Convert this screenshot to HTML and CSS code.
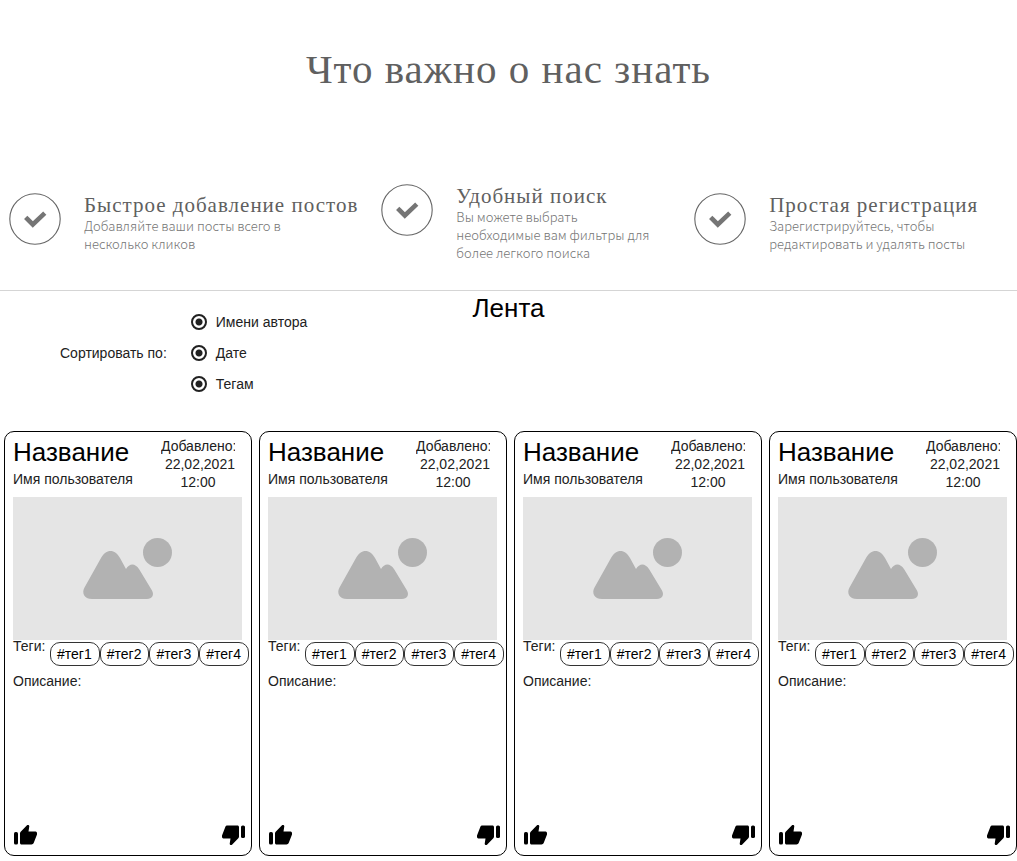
FILE: index.html
```html
<!DOCTYPE html>
<html lang="ru">
<head>
<meta charset="utf-8">
<meta name="viewport" content="width=device-width, initial-scale=1">
<title>Лента</title>
<link rel="stylesheet" href="styles.css">
</head>
<body>
<svg class="sprite" aria-hidden="true">
  <symbol id="check" viewBox="0 0 52 52">
    <circle cx="26" cy="26" r="25.2" fill="none" stroke="#666" stroke-width="1.1"/>
    <path d="M18.300 26l5.500 5.500 10.300-9.800" fill="none" stroke="#757575" stroke-width="4.600" stroke-linecap="square" stroke-linejoin="miter"/>
  </symbol>
  <symbol id="photo" viewBox="0 0 229 143">
    <rect width="229" height="143" fill="#e5e5e5"/>
    <circle cx="144.500" cy="55.500" r="14.500" fill="#b2b2b2"/>
    <path d="M79 102c-8 0-10.500-6-7.500-11.500L88 61c5-9.500 14-9.500 19 0l6 11c3.500-6 9-6 13 0l13 21.500c2.500 4.500 0 8.500-5 8.500z" fill="#b2b2b2"/>
  </symbol>
  <symbol id="thumb" viewBox="0 0 24 24">
    <rect x="1" y="9" width="4" height="12.500" rx="1.600"/>
    <path d="M7 20V10.300c0-.6.300-1.200.7-1.600L14 2.300c.8-.9 2.400-.2 2.300 1L15.500 8.400H22c1.600 0 2.600 1.500 2 3l-3.300 8.700c-.4.900-1.200 1.400-2.200 1.400H8.600C7.700 21.500 7 20.900 7 20z"/>
  </symbol>
</svg>

<header class="about">
  <h1 class="about-title">Что важно о нас знать</h1>
  <div class="features">
    <section class="feature">
      <svg class="feature-icon" aria-hidden="true"><use href="#check"/></svg>
      <div>
        <h2 class="feature-title">Быстрое добавление постов</h2>
        <p class="feature-text">Добавляйте ваши посты всего в несколько кликов</p>
      </div>
    </section>
    <section class="feature">
      <svg class="feature-icon" aria-hidden="true"><use href="#check"/></svg>
      <div>
        <h2 class="feature-title">Удобный поиск</h2>
        <p class="feature-text">Вы можете выбрать необходимые вам фильтры для более легкого поиска</p>
      </div>
    </section>
    <section class="feature">
      <svg class="feature-icon" aria-hidden="true"><use href="#check"/></svg>
      <div>
        <h2 class="feature-title">Простая регистрация</h2>
        <p class="feature-text">Зарегистрируйтесь, чтобы редактировать и удалять посты</p>
      </div>
    </section>
  </div>
</header>

<main>
  <div class="toolbar">
    <div class="sort" role="group" aria-labelledby="sort-label">
      <span id="sort-label">Сортировать по:</span>
      <div class="options">
        <label class="option"><input class="radio" type="radio" name="author" checked>Имени автора</label>
        <label class="option"><input class="radio" type="radio" name="date" checked>Дате</label>
        <label class="option"><input class="radio" type="radio" name="tags" checked>Тегам</label>
      </div>
    </div>
    <h2 class="feed-title">Лента</h2>
  </div>

  <div class="feed">
    <article class="card">
      <div class="card-head">
        <div><h3 class="card-title">Название</h3><p class="author">Имя пользователя</p></div>
        <p class="date">Добавлено: &nbsp;22,02,2021 12:00</p>
      </div>
      <svg class="photo" role="img" aria-label="Фото"><use href="#photo"/></svg>
      <div class="tags"><span class="tags-label">Теги:</span><a class="tag" href="#">#тег1</a><a class="tag" href="#">#тег2</a><a class="tag" href="#">#тег3</a><a class="tag" href="#">#тег4</a></div>
      <p class="description">Описание:</p>
      <div class="votes">
        <button class="vote" aria-label="Нравится"><svg class="thumb"><use href="#thumb"/></svg></button>
        <button class="vote" aria-label="Не нравится"><svg class="thumb thumb-down"><use href="#thumb"/></svg></button>
      </div>
    </article>
    <article class="card">
      <div class="card-head">
        <div><h3 class="card-title">Название</h3><p class="author">Имя пользователя</p></div>
        <p class="date">Добавлено: &nbsp;22,02,2021 12:00</p>
      </div>
      <svg class="photo" role="img" aria-label="Фото"><use href="#photo"/></svg>
      <div class="tags"><span class="tags-label">Теги:</span><a class="tag" href="#">#тег1</a><a class="tag" href="#">#тег2</a><a class="tag" href="#">#тег3</a><a class="tag" href="#">#тег4</a></div>
      <p class="description">Описание:</p>
      <div class="votes">
        <button class="vote" aria-label="Нравится"><svg class="thumb"><use href="#thumb"/></svg></button>
        <button class="vote" aria-label="Не нравится"><svg class="thumb thumb-down"><use href="#thumb"/></svg></button>
      </div>
    </article>
    <article class="card">
      <div class="card-head">
        <div><h3 class="card-title">Название</h3><p class="author">Имя пользователя</p></div>
        <p class="date">Добавлено: &nbsp;22,02,2021 12:00</p>
      </div>
      <svg class="photo" role="img" aria-label="Фото"><use href="#photo"/></svg>
      <div class="tags"><span class="tags-label">Теги:</span><a class="tag" href="#">#тег1</a><a class="tag" href="#">#тег2</a><a class="tag" href="#">#тег3</a><a class="tag" href="#">#тег4</a></div>
      <p class="description">Описание:</p>
      <div class="votes">
        <button class="vote" aria-label="Нравится"><svg class="thumb"><use href="#thumb"/></svg></button>
        <button class="vote" aria-label="Не нравится"><svg class="thumb thumb-down"><use href="#thumb"/></svg></button>
      </div>
    </article>
    <article class="card">
      <div class="card-head">
        <div><h3 class="card-title">Название</h3><p class="author">Имя пользователя</p></div>
        <p class="date">Добавлено: &nbsp;22,02,2021 12:00</p>
      </div>
      <svg class="photo" role="img" aria-label="Фото"><use href="#photo"/></svg>
      <div class="tags"><span class="tags-label">Теги:</span><a class="tag" href="#">#тег1</a><a class="tag" href="#">#тег2</a><a class="tag" href="#">#тег3</a><a class="tag" href="#">#тег4</a></div>
      <p class="description">Описание:</p>
      <div class="votes">
        <button class="vote" aria-label="Нравится"><svg class="thumb"><use href="#thumb"/></svg></button>
        <button class="vote" aria-label="Не нравится"><svg class="thumb thumb-down"><use href="#thumb"/></svg></button>
      </div>
    </article>
  </div>
</main>
</body>
</html>
```

FILE: styles.css
```css
* {
  box-sizing: border-box;
}

body {
  margin: 0;
  background: #fff;
  color: #212121;
  font: 14px/18px "Liberation Sans", Arial, sans-serif;
}

h1, h2, h3, p {
  margin: 0;
  font-weight: 400;
}

.sprite {
  display: none;
}

/* About */
.about {
  padding: 45px 9px 24px;
  border-bottom: 1px solid #d5d5d5;
}

.about-title {
  margin-bottom: 87px;
  color: #606060;
  font: 41px/48px "Liberation Serif", "Times New Roman", serif;
  letter-spacing: 1px;
  text-align: center;
}

.features {
  display: grid;
  grid-template-columns: 349fr 290fr 314fr;
  gap: 23px;
  align-items: center;
  min-height: 86px;
}

.feature {
  display: flex;
  gap: 23px;
  align-items: flex-start;
}

.feature-icon {
  flex: none;
  width: 52px;
  height: 52px;
}

.feature-title {
  color: #606060;
  font: 21px/24px "Liberation Serif", "Times New Roman", serif;
  letter-spacing: 1px;
  white-space: nowrap;
}

.feature-text {
  max-width: 200px;
  color: #757575;
  font: 300 13px/18px "Noto Sans CJK SC", "Noto Sans", sans-serif;
}

/* Sorting */
.toolbar {
  display: grid;
  grid-template-columns: 1fr auto 1fr;
  align-items: start;
  padding: 2px 0 32px;
}

.sort {
  display: flex;
  gap: 24px;
  align-items: center;
  padding: 13px 0 0 60px;
}

.options {
  display: grid;
}

.option {
  display: flex;
  gap: 9px;
  align-items: center;
  height: 31px;
}

.radio {
  appearance: none;
  width: 16px;
  height: 16px;
  margin: 0;
  border: 2px solid #212121;
  border-radius: 50%;
  background: radial-gradient(circle, #212121 3px, #fff 4px);
}

.feed-title {
  color: #000;
  font-size: 26px;
  line-height: 30px;
}

/* Cards */
.feed {
  display: grid;
  grid-template-columns: repeat(4, 1fr);
  gap: 7px;
  padding: 0 0 5px 4px;
}

.card {
  display: flex;
  flex-direction: column;
  min-width: 0;
  min-height: 425px;
  padding: 5px 5px 8px 8px;
  border: 1px solid #000;
  border-radius: 10px;
}

.card-head {
  display: flex;
  justify-content: space-between;
  padding-right: 11px;
}

.card-title {
  color: #000;
  font-size: 26px;
  line-height: 30px;
}

.author {
  margin-top: 3px;
}

.date {
  width: 74px;
  overflow: hidden;
  text-align: center;
}

.photo {
  width: calc(100% - 4px);
  aspect-ratio: 229 / 143;
  margin-top: 6px;
}

.tags {
  display: flex;
  align-items: flex-start;
}

.tags-label {
  width: 37px;
  flex: none;
  line-height: 12px;
}

.tag {
  flex: none;
  margin-top: 2px;
  padding: 2px 7px 2px 6px;
  border: 1px solid #333;
  border-radius: 10px;
  color: #000;
  line-height: 18px;
  text-decoration: none;
}

.description {
  margin-top: 6px;
}

.votes {
  display: flex;
  justify-content: space-between;
  margin-top: auto;
}

.vote {
  display: flex;
  padding: 0;
  border: 0;
  background: none;
  color: #000;
}

.thumb {
  width: 24px;
  height: 24px;
  fill: currentColor;
  overflow: visible;
}

.thumb-down {
  transform: rotate(180deg);
}
```
